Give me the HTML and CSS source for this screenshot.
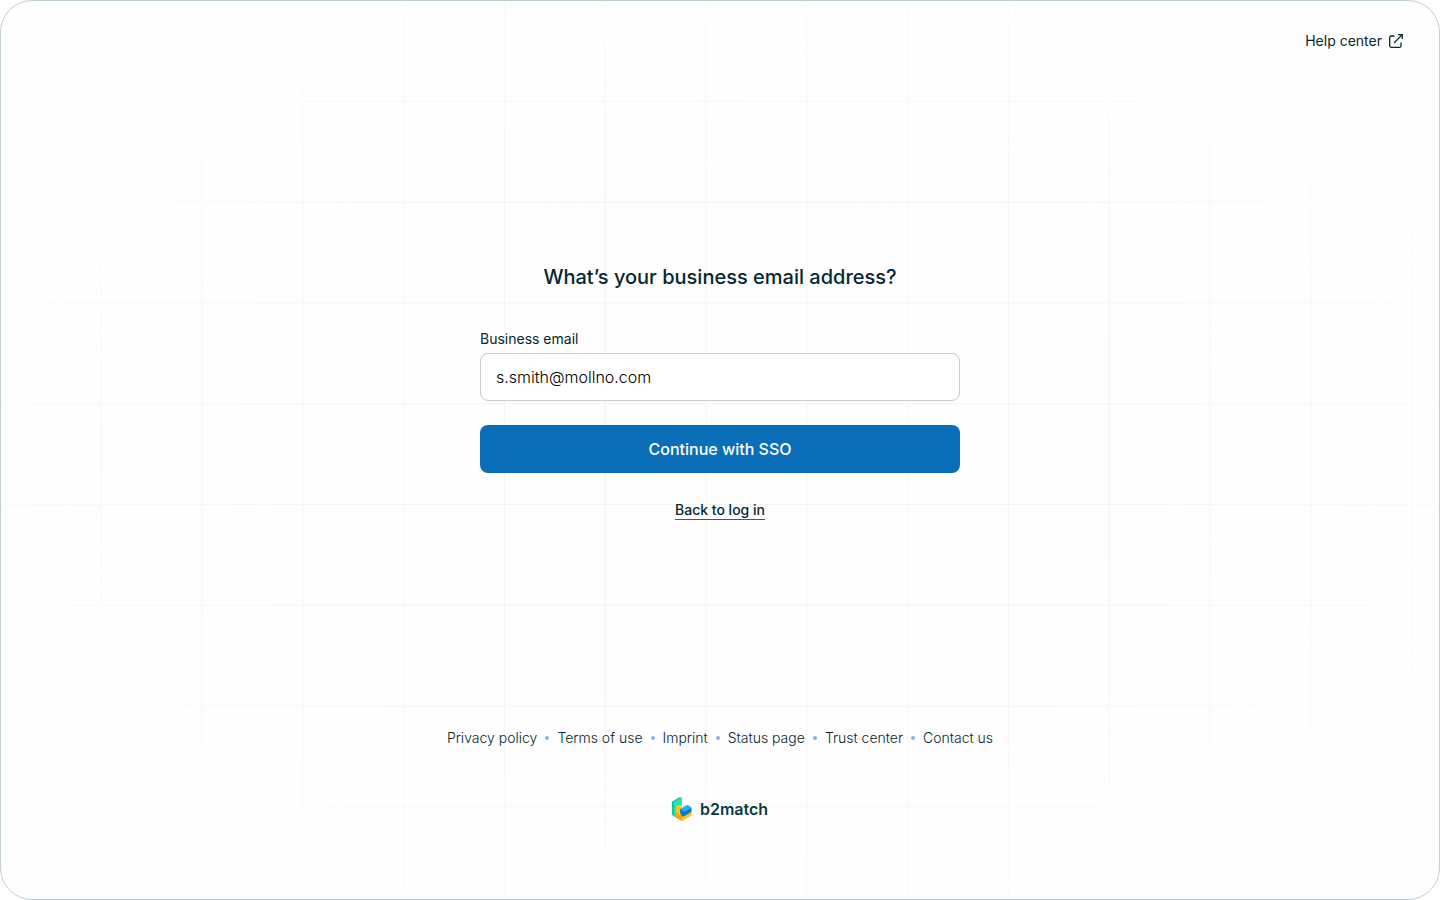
FILE: index.html
```html
<!DOCTYPE html>
<html lang="en">
<head>
<meta charset="utf-8">
<meta name="viewport" content="width=device-width, initial-scale=1">
<title>Log in with SSO</title>
<link rel="stylesheet" href="styles.css">
</head>
<body>
<div class="page">
  <header class="header">
    <a class="help" href="#">Help center
      <svg class="help-icon" viewBox="0 0 16 16" fill="none" stroke="currentColor" stroke-width="1.3" aria-hidden="true"><path d="M6.500 3H3.200A1.500 1.500 0 0 0 1.700 4.500V12.800A1.500 1.500 0 0 0 3.200 14.300H11.500A1.500 1.500 0 0 0 13 12.800V9.500M10 1.700H14.300V6M14.100 1.900L6 10"/></svg>
    </a>
  </header>
  <main class="main">
    <h1 class="title">What’s your business email address?</h1>
    <form class="form">
      <label class="label" for="email">Business email</label>
      <input class="input" id="email" type="email" value="s.smith@mollno.com">
      <button class="submit" type="button">Continue with SSO</button>
    </form>
    <a class="back" href="#">Back to log in</a>
  </main>
  <footer class="footer">
    <nav class="links">
      <a class="link" href="#">Privacy policy</a><span class="dot"></span>
      <a class="link" href="#">Terms of use</a><span class="dot"></span>
      <a class="link" href="#">Imprint</a><span class="dot"></span>
      <a class="link" href="#">Status page</a><span class="dot"></span>
      <a class="link" href="#">Trust center</a><span class="dot"></span>
      <a class="link" href="#">Contact us</a>
    </nav>
    <a class="brand" href="#">
      <svg class="brand-icon" viewBox="0 0 20 24" aria-hidden="true">
        <path fill="#10c79d" d="M0 4.500L7.500 0.300Q9.500-.3 9.700 1.500V8L5 11V21L1 18.800Q0 18.200 0 17Z"/>
        <path fill="#1ee8b0" d="M2 4.800L8 1.400Q9.700 .6 9.700 2V8L5 11V20.800L3 19.700Q2 19 2 17.500Z"/>
        <path fill="#ffc21c" d="M4 10.500Q4 9.300 5 8.700L7.500 7.800Q9 7.800 9.500 9V20L4 17Z"/>
        <path fill="#ff9f0d" d="M4 15.500L10 18.800V24Q9.500 24 9 23.700L5 21.400Q4 20.700 4 19.500Z"/>
        <path fill="#ffc21c" d="M9.500 18.800L19.500 13.500V17.500Q19.500 18.500 18.500 19.200L11 23.600Q10.500 24 9.500 24Z"/>
        <path fill="#22adf5" d="M8 12L14.500 8.200Q15.300 7.700 16.100 8.200L18.700 9.800Q19.500 10.400 18.700 11L12.500 14.600L9 17.500Z"/>
        <path fill="#0878d0" d="M8 12L12 14.700L19.500 10.400V14Q19.500 15 18.500 15.600L12 19.300Q10.500 20 9.500 18.500L8.500 17Z"/>
      </svg>
      <span class="brand-name">b2match</span>
    </a>
  </footer>
</div>
</body>
</html>
```
FILE: styles.css
```css
* { box-sizing: border-box; }
body {
  margin: 0;
  background: #fff;
  color: #06272f;
  font-family: Inter, "Liberation Sans", sans-serif;
  font-size: 14px;
  line-height: 20px;
}
a { color: inherit; text-decoration: none; }
.page {
  position: relative;
  isolation: isolate;
  display: flex;
  flex-direction: column;
  min-height: 100vh;
  border: 1px solid #bfced2;
  border-radius: 32px;
  background: #fefefe;
  overflow: hidden;
}
.page::before {
  content: "";
  position: absolute;
  inset: -1px;
  z-index: -1;
  background-image:
    linear-gradient(to right, #f3f4f4 1px, transparent 1px),
    linear-gradient(to bottom, #f3f4f4 1px, transparent 1px);
  background-size: 7vw 7vw;
  mask-image: radial-gradient(ellipse at center, #000 40%, transparent 90%);
}
.header {
  display: flex;
  justify-content: flex-end;
  padding: 30px 35px 29px;
}
.help { display: flex; align-items: center; gap: 6px; }
.help-icon { width: 16px; height: 16px; }
.main {
  flex: 1;
  display: flex;
  flex-direction: column;
  align-items: center;
  justify-content: center;
  width: 100%;
  max-width: 512px;
  margin: 0 auto;
  padding: 0 16px 27px;
}
.title {
  margin: 0 0 36px;
  font-size: 20px;
  font-weight: 500;
  line-height: 32px;
  text-align: center;
}
.form { display: flex; flex-direction: column; width: 100%; }
.label { margin-bottom: 4px; }
.input {
  width: 100%;
  height: 48px;
  padding: 0 15px;
  border: 1px solid #c3cecf;
  border-radius: 8px;
  background: #fff;
  color: #000;
  font: 300 16px/24px Inter, "Liberation Sans", sans-serif;
}
.submit {
  height: 48px;
  margin-top: 24px;
  border: 0;
  border-radius: 8px;
  background: #0b6eb9;
  color: #fff;
  font: 500 16px/24px Inter, "Liberation Sans", sans-serif;
}
.back {
  margin-top: 28px;
  border-bottom: 1px solid #42595f;
  font-weight: 500;
  line-height: 18px;
}
.footer {
  display: flex;
  flex-direction: column;
  align-items: center;
  gap: 49px;
  padding: 0 16px 78px;
}
.links {
  display: flex;
  flex-wrap: wrap;
  align-items: center;
  justify-content: center;
  gap: 8px;
  font-weight: 300;
}
.dot { width: 4px; height: 4px; border-radius: 50%; background: #86b5df; }
.brand { display: flex; align-items: center; gap: 8px; color: #073b46; }
.brand-icon { width: 20px; height: 24px; }
.brand-name { font-size: 16px; font-weight: 600; line-height: 24px; }
```
